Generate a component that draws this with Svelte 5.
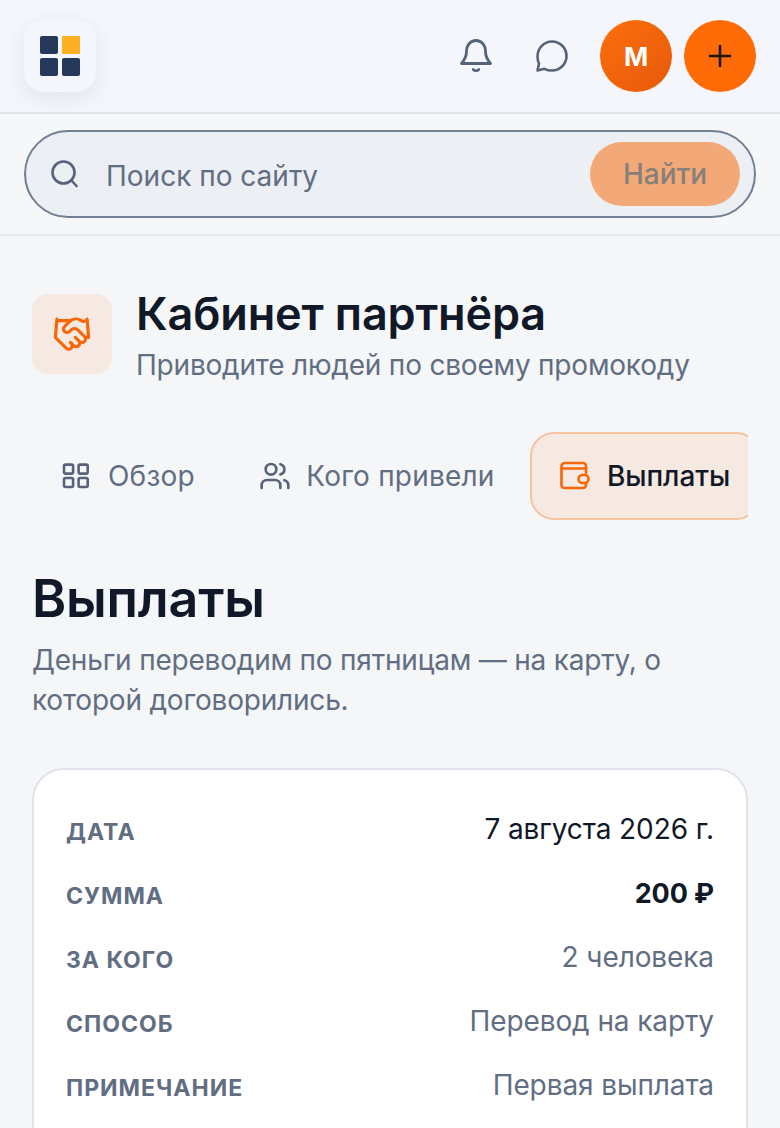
<script lang="ts">
  const rows = [
    { label: 'Дата', value: '7 августа 2026 г.', kind: 'strong' },
    { label: 'Сумма', value: '200 ₽', kind: 'amount' },
    { label: 'За кого', value: '2 человека', kind: '' },
    { label: 'Способ', value: 'Перевод на карту', kind: '' },
    { label: 'Примечание', value: 'Первая выплата', kind: '' }
  ];
</script>

<div class="page">
  <header class="topbar">
    <div class="logo">
      <svg width="40" height="40" viewBox="0 0 40 40">
        <rect x="0" y="0" width="18" height="18" rx="2" fill="#263859"></rect>
        <rect x="22" y="0" width="18" height="18" rx="1" fill="#fdb022"></rect>
        <rect x="0" y="22" width="18" height="18" rx="2" fill="#263859"></rect>
        <rect x="22" y="22" width="18" height="18" rx="2" fill="#263859"></rect>
      </svg>
    </div>
    <div class="actions">
      <div class="icons">
        <button class="icon-btn" aria-label="Уведомления">
          <svg width="40" height="40" viewBox="0 0 40 40" fill="none" stroke="#56637a" stroke-width="2.8" stroke-linecap="round" stroke-linejoin="round">
            <path d="M10.500 15.500C10.500 9 14.500 4.500 20 4.500S29.500 9 29.500 15.500c0 5 1.500 8 5 12h-29c3.500-4 5-7 5-12z"></path>
            <path d="M17.200 33.500c1.500 1.500 4 1.500 5.600 0"></path>
          </svg>
        </button>
        <button class="icon-btn" aria-label="Сообщения">
          <svg width="40" height="40" viewBox="0 0 40 40" fill="none" stroke="#56637a" stroke-width="2.6" stroke-linecap="round" stroke-linejoin="round">
            <path d="M6.500 34.500L8 27.500C6.800 25.300 6.500 23 6.500 20.500 6.500 12 13 5.500 21 5.500S35.500 12 35.500 20 29 34.500 21 34.500c-3 0-5.500-.7-7.500-1.700z"></path>
          </svg>
        </button>
      </div>
      <div class="avatar">М</div>
      <button class="plus" aria-label="Добавить">
        <svg width="28" height="28" viewBox="0 0 28 28" fill="none" stroke="#1c1410" stroke-width="2.6" stroke-linecap="round">
          <path d="M14 4v20M4 14h20"></path>
        </svg>
      </button>
    </div>
  </header>

  <div class="searchbar">
    <div class="search">
      <svg class="search-icon" width="32" height="32" viewBox="0 0 32 32" fill="none" stroke="#56637a" stroke-width="2.6" stroke-linecap="round">
        <circle cx="13.500" cy="14.500" r="11"></circle>
        <path d="M21.500 22.500l5 5.500"></path>
      </svg>
      <span class="placeholder">Поиск по сайту</span>
      <span class="find">Найти</span>
    </div>
  </div>

  <main class="content">
    <div class="head">
      <div class="head-icon">
        <svg width="40" height="40" viewBox="0 0 24 24" fill="none" stroke="#f76707" stroke-width="1.900" stroke-linecap="round" stroke-linejoin="round">
          <path d="M11 17l2 2a1 1 0 1 0 3-3"></path>
          <path d="M14 14l2.500 2.500a1 1 0 1 0 3-3l-3.880-3.880a3 3 0 0 0-4.240 0l-.880.880a1 1 0 1 1-3-3l2.810-2.810a5.790 5.790 0 0 1 7.060-.870l.470.280a2 2 0 0 0 1.420.250L21 4"></path>
          <path d="M21 3l1 11h-2"></path>
          <path d="M3 3L2 14l6.500 6.500a1 1 0 1 0 3-3"></path>
          <path d="M3 4h8"></path>
        </svg>
      </div>
      <div>
        <h1>Кабинет партнёра</h1>
        <p class="head-sub">Приводите людей по своему промокоду</p>
      </div>
    </div>

    <nav class="tabs">
      <span class="tab">
        <svg width="32" height="32" viewBox="0 0 32 32" fill="none" stroke="#56637a" stroke-width="2.600" stroke-linejoin="round">
          <rect x="2" y="4.600" width="9.100" height="9" rx="1.500"></rect>
          <rect x="16.600" y="4.600" width="9.100" height="9" rx="1.500"></rect>
          <rect x="2" y="18" width="9.100" height="9" rx="1.500"></rect>
          <rect x="16.600" y="18" width="9.100" height="9" rx="1.500"></rect>
        </svg>
        Обзор
      </span>
      <span class="tab">
        <svg class="people" width="32" height="32" viewBox="0 0 24 24" fill="none" stroke="#56637a" stroke-width="2" stroke-linecap="round" stroke-linejoin="round">
          <path d="M16 21v-2a4 4 0 0 0-4-4H6a4 4 0 0 0-4 4v2"></path>
          <circle cx="9" cy="7" r="4"></circle>
          <path d="M22 21v-2a4 4 0 0 0-3-3.870"></path>
          <path d="M16 3.130a4 4 0 0 1 0 7.750"></path>
        </svg>
        Кого привели
      </span>
      <span class="tab active">
        <svg width="32" height="32" viewBox="0 0 32 32" fill="none" stroke="#f76707" stroke-width="2.600" stroke-linecap="round" stroke-linejoin="round">
          <path d="M26 13V6a3 3 0 0 0-3-3H5A3.500 3.500 0 0 0 1.500 6.500V25a3 3 0 0 0 3 3H23a3 3 0 0 0 3-3v-2"></path>
          <path d="M1.500 8.500H26"></path>
          <rect x="18.500" y="15" width="10" height="8" rx="4"></rect>
        </svg>
        Выплаты
      </span>
    </nav>

    <h2>Выплаты</h2>
    <p class="lead">Деньги переводим по пятницам — на карту, о которой договорились.</p>

    <section class="card">
      {#each rows as row}
        <div class="row">
          <span class="label">{row.label}</span>
          <span class="value {row.kind}">{row.value}</span>
        </div>
      {/each}
    </section>
  </main>
</div>

<style>
  :global(html), :global(body) {
    margin: 0;
    height: 100%;
    overflow: hidden;
    background: #f5f6f8;
  }

  .page {
    height: 1128px;
    overflow: hidden;
    font-family: Inter, "Noto Sans", sans-serif;
    color: #111827;
  }

  .topbar {
    display: flex;
    align-items: center;
    justify-content: space-between;
    box-sizing: border-box;
    height: 114px;
    padding: 0 24px;
    background: #f4f6fb;
    border-bottom: 2px solid #e0e4ea;
  }

  .logo {
    display: flex;
    align-items: center;
    justify-content: center;
    width: 72px;
    height: 72px;
    border-radius: 20px;
    background: #f4f6fb;
    box-shadow: 0 6px 20px rgba(38, 56, 89, 0.09);
  }

  .actions {
    display: flex;
    align-items: center;
    gap: 12px;
  }

  .icons {
    display: flex;
    gap: 11px;
    margin-right: 5px;
  }

  .icon-btn {
    display: flex;
    align-items: center;
    justify-content: center;
    width: 64px;
    height: 72px;
    padding: 0;
    background: none;
    border: none;
  }

  .avatar,
  .plus {
    display: flex;
    align-items: center;
    justify-content: center;
    width: 72px;
    height: 72px;
    padding: 0;
    border: none;
    border-radius: 50%;
  }

  .avatar {
    background: linear-gradient(135deg, #fb6f0a, #e8590c);
    color: #fff;
    font-size: 26px;
    font-weight: 700;
  }

  .plus {
    background: #ff6b06;
  }

  .searchbar {
    box-sizing: border-box;
    height: 122px;
    padding: 16px 24px;
    background: #f5f7f9;
    border-bottom: 2px solid #e6e9ee;
  }

  .search {
    display: flex;
    align-items: center;
    box-sizing: border-box;
    height: 88px;
    padding: 0 14px 0 24px;
    background: #eceff3;
    border: 2px solid #738093;
    border-radius: 44px;
  }

  .search-icon {
    flex: none;
  }

  .placeholder {
    flex: 1;
    margin-left: 24px;
    padding-top: 4px;
    font-size: 28px;
    color: #616e82;
  }

  .find {
    display: flex;
    align-items: center;
    justify-content: center;
    width: 150px;
    height: 64px;
    border-radius: 32px;
    background: #f3a877;
    color: #85807a;
    font-size: 28px;
    font-weight: 500;
  }

  .content {
    padding: 53px 32px 0;
  }

  .head {
    display: flex;
    align-items: flex-start;
    gap: 24px;
  }

  .head-icon {
    display: flex;
    align-items: center;
    justify-content: center;
    flex: none;
    width: 80px;
    height: 80px;
    margin-top: 5px;
    border-radius: 16px;
    background: #f6e9e1;
  }

  h1 {
    margin: 0;
    font-size: 45px;
    line-height: 50px;
    font-weight: 600;
    letter-spacing: -0.15px;
    color: #111827;
  }

  .head-sub {
    margin: 8px 0 0;
    font-size: 28px;
    line-height: 36px;
    letter-spacing: -0.2px;
    color: #616e82;
  }

  .tabs {
    display: flex;
    gap: 5.5px;
    margin-top: 49px;
    overflow: hidden;
  }

  .tab {
    display: flex;
    align-items: center;
    flex: none;
    gap: 14px;
    box-sizing: border-box;
    height: 88px;
    padding: 0 28px;
    border: 2px solid transparent;
    border-radius: 24px;
    font-size: 28px;
    letter-spacing: 0.2px;
    color: #616e82;
  }

  .people {
    margin-left: -1px;
    margin-right: 1px;
  }

  .tab.active {
    gap: 15px;
    background: #f6e9e1;
    border-color: #f5c39f;
    color: #111827;
    font-weight: 500;
    letter-spacing: -0.1px;
  }

  h2 {
    margin: 43px 0 0;
    font-size: 52px;
    line-height: 72px;
    font-weight: 600;
    letter-spacing: -0.2px;
  }

  .lead {
    margin: 5px 0 0;
    font-size: 28px;
    line-height: 40px;
    letter-spacing: -0.2px;
    color: #616e82;
  }

  .card {
    margin-top: 48px;
    padding: 30px 32px 200px;
    background: #fff;
    border: 2px solid #e0e4ea;
    border-radius: 32px;
  }

  .row {
    display: flex;
    align-items: center;
    justify-content: space-between;
    height: 64px;
  }

  .label {
    font-size: 23px;
    font-weight: 700;
    letter-spacing: 1px;
    text-transform: uppercase;
    color: #616e82;
  }

  .value {
    margin-bottom: 6px;
    font-size: 28px;
    letter-spacing: -0.1px;
    color: #616e82;
  }

  .value.strong {
    color: #111827;
  }

  .value.amount {
    color: #111827;
    font-size: 27px;
    font-weight: 700;
  }
</style>
